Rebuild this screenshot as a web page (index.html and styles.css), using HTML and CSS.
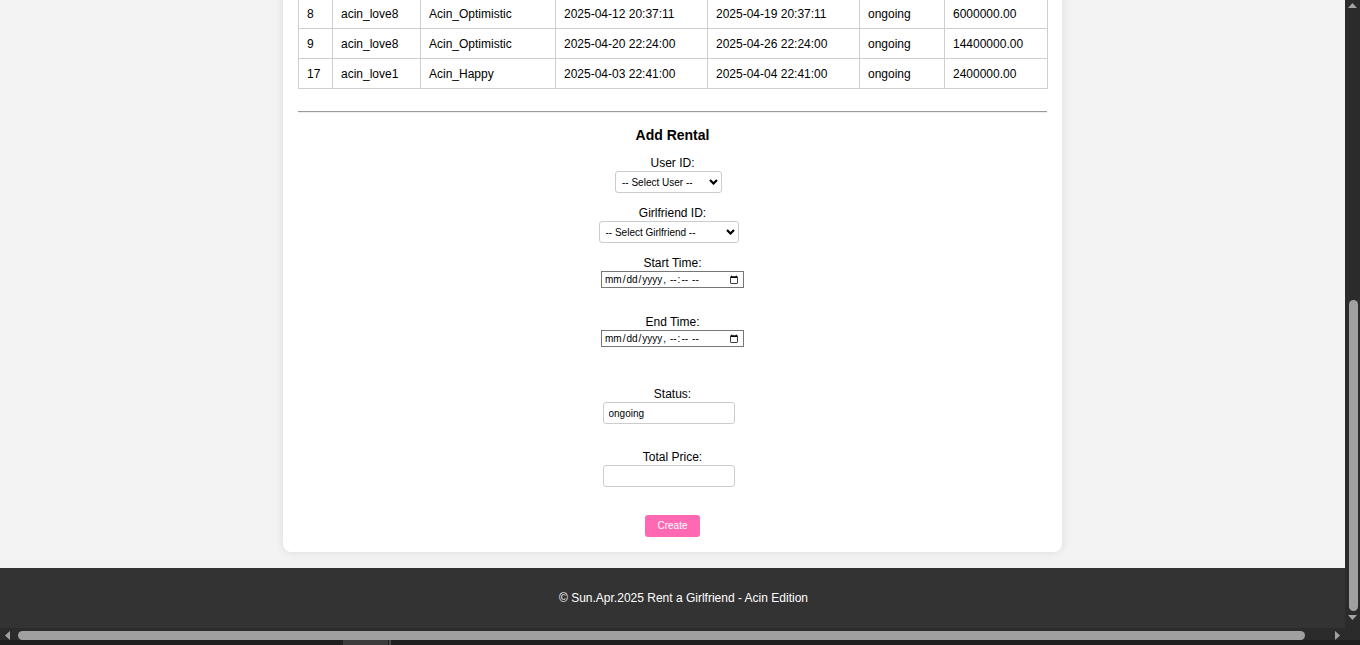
FILE: index.html
```html
<!DOCTYPE html>
<html lang="en">
<head>
<meta charset="utf-8">
<title>Rent a Girlfriend - Rentals</title>
<link rel="stylesheet" href="styles.css">
</head>
<body>
<div class="screen">
  <div class="viewport">
    <main class="card">
      <h2 class="list-title">Rental List</h2>
      <table class="rentals">
        <colgroup>
          <col class="c-id"><col class="c-user"><col class="c-gf"><col class="c-time"><col class="c-time"><col class="c-status"><col class="c-price">
        </colgroup>
        <thead>
          <tr><th>ID</th><th>User</th><th>Girlfriend</th><th>Start Time</th><th>End Time</th><th>Status</th><th>Total Price</th></tr>
        </thead>
        <tbody>
          <tr><td>8</td><td>acin_love8</td><td>Acin_Optimistic</td><td>2025-04-12 20:37:11</td><td>2025-04-19 20:37:11</td><td>ongoing</td><td>6000000.00</td></tr>
          <tr><td>9</td><td>acin_love8</td><td>Acin_Optimistic</td><td>2025-04-20 22:24:00</td><td>2025-04-26 22:24:00</td><td>ongoing</td><td>14400000.00</td></tr>
          <tr><td>17</td><td>acin_love1</td><td>Acin_Happy</td><td>2025-04-03 22:41:00</td><td>2025-04-04 22:41:00</td><td>ongoing</td><td>2400000.00</td></tr>
        </tbody>
      </table>
      <hr class="divider">
      <h3 class="form-title">Add Rental</h3>
      <form class="rental-form">
        <div class="field gap-sm">
          <label class="label">User ID:</label>
          <span class="select-wrap">
            <select class="select sel-user"><option>-- Select User --</option></select>
            <svg class="chev" width="9" height="6" viewBox="0 0 9 6"><path d="M1 1 L4.5 4.5 L8 1" fill="none" stroke="#000" stroke-width="2.2"/></svg>
          </span>
        </div>
        <div class="field gap-sm">
          <label class="label">Girlfriend ID:</label>
          <span class="select-wrap">
            <select class="select sel-gf"><option>-- Select Girlfriend --</option></select>
            <svg class="chev" width="9" height="6" viewBox="0 0 9 6"><path d="M1 1 L4.5 4.5 L8 1" fill="none" stroke="#000" stroke-width="2.2"/></svg>
          </span>
        </div>
        <div class="field gap-date">
          <label class="label">Start Time:</label>
          <input class="date" type="datetime-local">
        </div>
        <div class="field gap-xl">
          <label class="label">End Time:</label>
          <input class="date" type="datetime-local">
        </div>
        <div class="field gap-md">
          <label class="label">Status:</label>
          <input class="text" type="text" value="ongoing">
        </div>
        <div class="field gap-lg">
          <label class="label">Total Price:</label>
          <input class="text" type="text">
        </div>
        <button class="btn" type="button">Create</button>
      </form>
    </main>
    <footer class="footer">© Sun.Apr.2025 Rent a Girlfriend - Acin Edition</footer>
  </div>

  <div class="vscroll">
    <span class="arrow-btn"><svg width="9" height="5" viewBox="0 0 9 5"><polygon points="4.5,0 9,5 0,5" fill="#a3a3a3"/></svg></span>
    <span class="vtrack"><span class="vthumb"></span></span>
    <span class="arrow-btn"><svg width="9" height="5" viewBox="0 0 9 5"><polygon points="0,0 9,0 4.5,5" fill="#a3a3a3"/></svg></span>
  </div>
  <div class="hscroll">
    <span class="harrow"><svg width="5" height="9" viewBox="0 0 5 9"><polygon points="5,0 5,9 0,4.5" fill="#a3a3a3"/></svg></span>
    <span class="htrack"><span class="hthumb"></span></span>
    <span class="harrow"><svg width="5" height="9" viewBox="0 0 5 9"><polygon points="0,0 0,9 5,4.5" fill="#a3a3a3"/></svg></span>
  </div>
  <div class="corner"></div>
  <div class="strip"><span class="strip-block"></span><span class="strip-tick"></span></div>
</div>
</body>
</html>
```
FILE: styles.css
```css
html, body {
  margin: 0;
  padding: 0;
  overflow: hidden;
}
body {
  font-family: "Liberation Sans", Arial, sans-serif;
  color: #000;
}
.screen {
  display: grid;
  grid-template-columns: 1345px 15px;
  grid-template-rows: 628px 12px 5px;
  width: 1360px;
  height: 645px;
  background: #2b2b2b;
}
.viewport {
  overflow: hidden;
  display: flex;
  flex-direction: column;
  justify-content: flex-end;
  background: #f3f3f3;
}
.card {
  flex-shrink: 0;
  box-sizing: border-box;
  width: 779px;
  margin: 0 auto 16px;
  padding: 15px;
  background: #fff;
  border-radius: 8px;
  box-shadow: 0 0 10px rgba(0, 0, 0, 0.1);
}
.list-title {
  margin: 0 0 10px;
  font-size: 16px;
  text-align: center;
}
.rentals {
  width: 749px;
  border-collapse: collapse;
  table-layout: fixed;
  font-size: 12px;
}
.c-id { width: 34px; }
.c-user { width: 88px; }
.c-gf { width: 135px; }
.c-time { width: 152px; }
.c-status { width: 85px; }
.c-price { width: 103px; }
.rentals th,
.rentals td {
  border: 1px solid #cfcfcf;
  height: 29px;
  padding: 0 8px;
  text-align: left;
  white-space: nowrap;
  line-height: 14px;
}
.rentals th {
  background: #f7f7f7;
  font-weight: bold;
}
.divider {
  margin: 22px 0 0;
  border: 0;
  border-top: 1px solid #9a9a9a;
  border-bottom: 1px solid #eeeeee;
  height: 0;
}
.form-title {
  margin: 14px 0 13px;
  font-size: 14px;
  line-height: 16px;
  text-align: center;
}
.rental-form {
  text-align: center;
  font-size: 12px;
}
.field {
  display: flex;
  flex-direction: column;
  align-items: center;
}
.gap-sm { margin-bottom: 13px; }
.gap-date { margin-bottom: 27px; }
.gap-md { margin-bottom: 26px; }
.gap-lg { margin-bottom: 28px; }
.gap-xl { margin-bottom: 40px; }
.label {
  display: block;
  line-height: 14px;
  height: 14px;
  margin-bottom: 1px;
}
.select-wrap {
  position: relative;
  display: block;
  margin-right: 8px;
  height: 22px;
}
.select {
  appearance: none;
  -webkit-appearance: none;
  box-sizing: border-box;
  height: 22px;
  padding: 0 0 0 6px;
  border: 1px solid #cccccc;
  border-radius: 3px;
  background: #fff;
  font-family: "Liberation Sans", Arial, sans-serif;
  font-size: 10px;
  color: #000;
  display: block;
}
.sel-user { width: 107px; }
.sel-gf { width: 140px; }
.chev {
  position: absolute;
  right: 4px;
  top: 8px;
  pointer-events: none;
}
.date {
  box-sizing: border-box;
  width: 143px;
  height: 17px;
  padding: 0 2px;
  border: 1px solid #767676;
  border-radius: 0;
  font-family: "Liberation Sans", Arial, sans-serif;
  font-size: 10px;
  background: #fff;
  display: block;
}
.text {
  box-sizing: border-box;
  width: 132px;
  height: 22px;
  margin-right: 8px;
  padding: 0 5px;
  border: 1px solid #cccccc;
  border-radius: 3px;
  font-family: "Liberation Sans", Arial, sans-serif;
  font-size: 10px;
  display: block;
}
.btn {
  display: inline-block;
  height: 22px;
  padding: 0 12px;
  border: 0;
  border-radius: 3px;
  background: #ff69b4;
  color: #fff;
  font-family: "Liberation Sans", Arial, sans-serif;
  font-size: 10px;
  line-height: 22px;
  vertical-align: top;
}
.footer {
  flex-shrink: 0;
  height: 60px;
  line-height: 60px;
  padding-left: 22px;
  background: #333333;
  color: #fff;
  font-size: 12px;
  text-align: center;
}
.vscroll {
  display: flex;
  flex-direction: column;
  background: #2b2b2b;
}
.arrow-btn {
  height: 15px;
  display: flex;
  align-items: center;
  justify-content: center;
  flex-shrink: 0;
}
.arrow-btn:first-child { align-items: flex-start; padding-top: 3px; height: 12px; }
.arrow-btn:last-child { align-items: flex-start; padding-top: 3px; height: 13px; }
.vtrack {
  flex: 1;
  display: flex;
  flex-direction: column;
  align-items: center;
}
.vthumb {
  width: 9px;
  height: 311px;
  margin-top: 285px;
  margin-left: 2px;
  border-radius: 5px;
  background: #a0a0a0;
}
.hscroll {
  display: flex;
  align-items: stretch;
  background: #2b2b2b;
}
.harrow {
  width: 15px;
  display: flex;
  align-items: center;
  justify-content: center;
  flex-shrink: 0;
  padding-top: 3px;
  box-sizing: border-box;
}
.htrack {
  flex: 1;
  display: flex;
  padding-top: 3px;
}
.hthumb {
  width: 1287px;
  height: 9px;
  margin-left: 3px;
  border-radius: 5px;
  background: #a0a0a0;
}
.corner {
  background: #2b2b2b;
}
.strip {
  grid-column: 1 / 3;
  background: #1f1f1f;
  display: flex;
}
.strip-block {
  width: 45px;
  margin-left: 343px;
  background: #3c3c3c;
}
.strip-tick {
  width: 2px;
  margin-left: 1px;
  background: #4a4a4a;
}
```
